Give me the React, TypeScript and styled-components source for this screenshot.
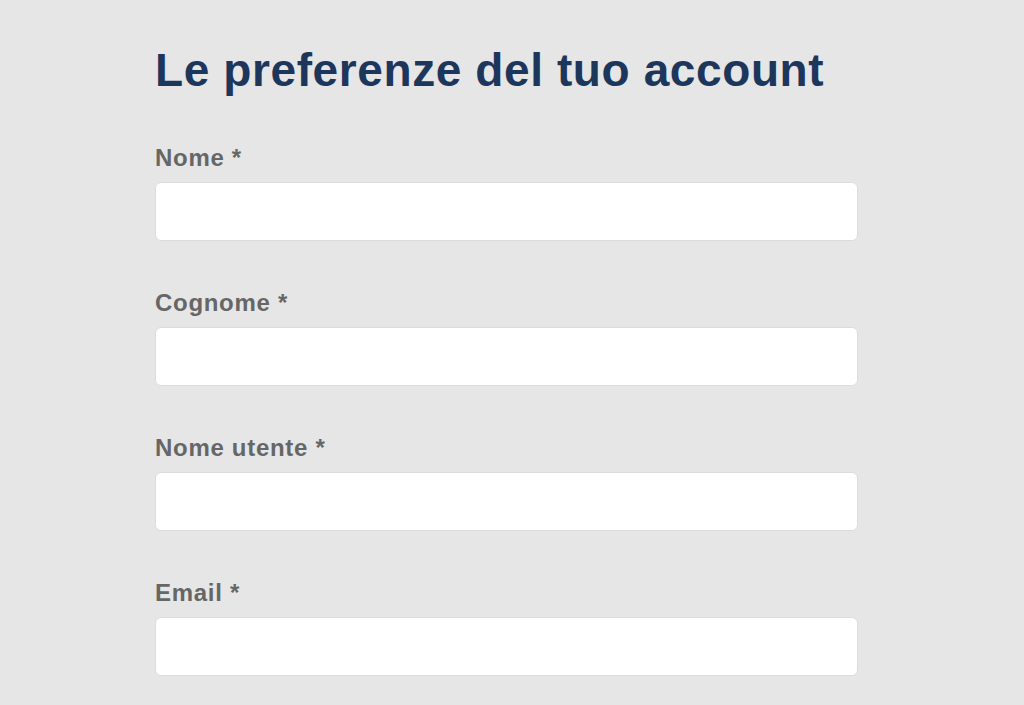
import React from "react";
import styled, { createGlobalStyle } from "styled-components";

const Global = createGlobalStyle`
  html, body { margin: 0; padding: 0; background: #e6e6e6; }
  body { font-family: "Liberation Sans", Arial, Helvetica, sans-serif; }
  * { box-sizing: border-box; }
`;

const Page = styled.div`
  min-height: 705px;
  background: #e6e6e6;
  padding: 42px 0 0 155px;
`;

const Form = styled.form`
  width: 703px;
  display: flex;
  flex-direction: column;
`;

const Title = styled.h1`
  margin: 0 0 46px;
  font-size: 46px;
  line-height: 56px;
  font-weight: 700;
  color: #1d365c;
  letter-spacing: 0.6px;
  white-space: nowrap;
`;

const Field = styled.div`
  display: flex;
  flex-direction: column;
  margin-bottom: 48px;
`;

const Label = styled.label`
  font-size: 24px;
  line-height: 28px;
  font-weight: 700;
  color: #666666;
  letter-spacing: 0.7px;
  margin-bottom: 10px;
`;

const Input = styled.input`
  height: 59px;
  width: 100%;
  background: #ffffff;
  border: 1px solid #dcdcdc;
  border-radius: 6px;
  padding: 0 14px;
  font-size: 20px;
  font-family: inherit;
  outline: none;
`;

const fields = [
  { id: "nome", label: "Nome *", type: "text" },
  { id: "cognome", label: "Cognome *", type: "text" },
  { id: "utente", label: "Nome utente *", type: "text" },
  { id: "email", label: "Email *", type: "email" },
];

export default function App() {
  return (
    <>
      <Global />
      <Page>
        <Form onSubmit={(e) => e.preventDefault()}>
          <Title>Le preferenze del tuo account</Title>
          {fields.map((f) => (
            <Field key={f.id}>
              <Label htmlFor={f.id}>{f.label}</Label>
              <Input id={f.id} type={f.type} />
            </Field>
          ))}
        </Form>
      </Page>
    </>
  );
}
